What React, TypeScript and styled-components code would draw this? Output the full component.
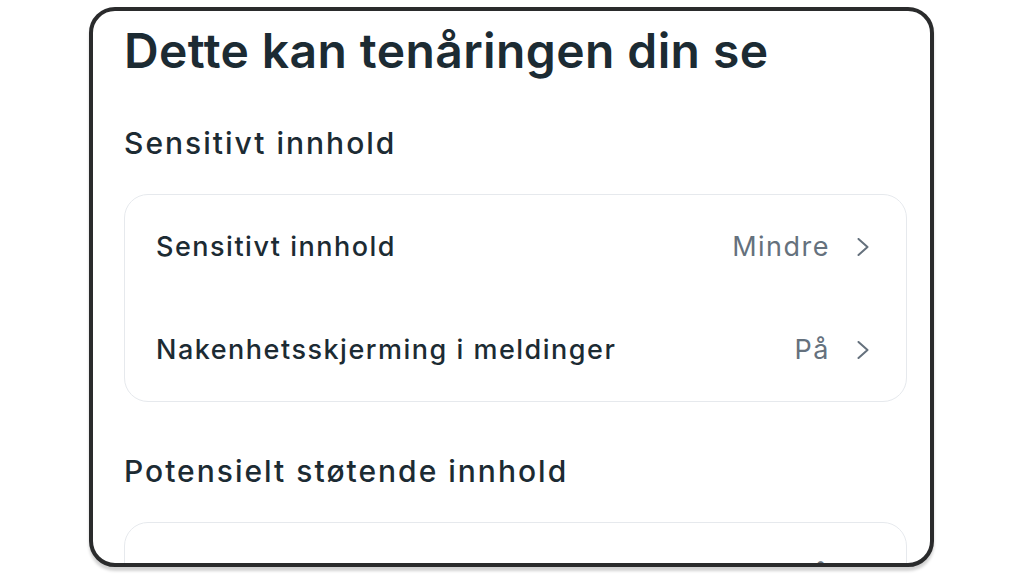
import React from "react";
import styled, { createGlobalStyle } from "styled-components";

const Global = createGlobalStyle`
  html, body { margin: 0; padding: 0; background: #ffffff; }
  body { font-family: Inter, "Noto Sans", sans-serif; -webkit-font-smoothing: antialiased; }
  #root { width: 1024px; height: 576px; overflow: hidden; }
`;

const Page = styled.div`
  width: 1024px;
  height: 576px;
  padding: 7px 0 0 89px;
  box-sizing: border-box;
  background: #ffffff;
`;

const Frame = styled.div`
  width: 845px;
  height: 560px;
  box-sizing: border-box;
  border: 4px solid #2a2b2c;
  border-radius: 26px;
  overflow: hidden;
  background: #ffffff;
  box-shadow: 0 4px 3px rgba(0, 0, 0, 0.18);
  padding: 10px 23px 0 31px;
`;

const Title = styled.h1`
  margin: 0;
  font-size: 48px;
  line-height: 60px;
  font-weight: 600;
  color: #1c2b33;
  letter-spacing: 0.4px;
  white-space: nowrap;
`;

const SectionTitle = styled.h2<{ $gap: number }>`
  margin: ${(p) => p.$gap}px 0 31px;
  font-size: 30px;
  line-height: 40px;
  font-weight: 500;
  color: #1c2b33;
  letter-spacing: 2px;
  white-space: nowrap;
`;

const Card = styled.div`
  border: 1px solid #e6e9ed;
  border-radius: 24px;
  background: #ffffff;
  display: flex;
  flex-direction: column;
`;

const Row = styled.div`
  height: 103px;
  display: flex;
  align-items: center;
  padding: 0 37px 0 31px;
  flex-shrink: 0;
`;

const Label = styled.span`
  flex: 1;
  font-size: 27px;
  font-weight: 500;
  color: #1c2b33;
  letter-spacing: 1.5px;
  white-space: nowrap;
`;

const Value = styled.span`
  font-size: 27px;
  font-weight: 400;
  color: #65717d;
  letter-spacing: 1.5px;
  margin-right: 27px;
`;

const Chevron = () => (
  <svg width="12" height="18" viewBox="0 0 12 18" fill="none">
    <path d="M1.5 1 L10.5 9 L1.5 17" stroke="#65717d" strokeWidth="2" strokeLinecap="round" strokeLinejoin="round" />
  </svg>
);

type Item = { label: string; value: string };

const Section = ({ title, gap, items }: { title: string; gap: number; items: Item[] }) => (
  <>
    <SectionTitle $gap={gap}>{title}</SectionTitle>
    <Card>
      {items.map((it) => (
        <Row key={it.label}>
          <Label>{it.label}</Label>
          <Value>{it.value}</Value>
          <Chevron />
        </Row>
      ))}
    </Card>
  </>
);

export default function App() {
  return (
    <>
      <Global />
      <Page>
        <Frame>
          <Title>Dette kan tenåringen din se</Title>
          <Section
            title="Sensitivt innhold"
            gap={42}
            items={[
              { label: "Sensitivt innhold", value: "Mindre" },
              { label: "Nakenhetsskjerming i meldinger", value: "På" },
            ]}
          />
          <Section
            title="Potensielt støtende innhold"
            gap={49}
            items={[
              { label: "Skjulte ord", value: "På" },
              { label: "Meldinger", value: "På" },
            ]}
          />
        </Frame>
      </Page>
    </>
  );
}
